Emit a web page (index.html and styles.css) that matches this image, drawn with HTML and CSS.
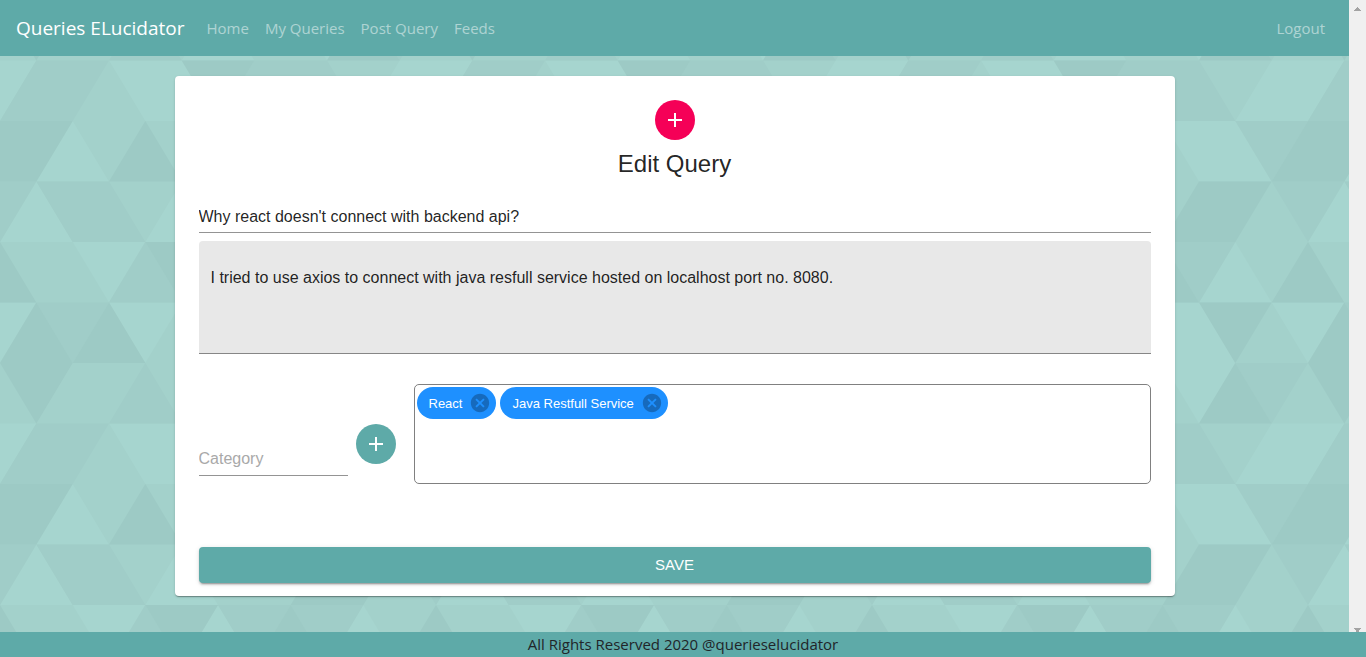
FILE: index.html
```html
<!DOCTYPE html>
<html lang="en">
<head>
<meta charset="utf-8">
<meta name="viewport" content="width=device-width, initial-scale=1">
<title>Queries ELucidator</title>
<link rel="stylesheet" href="styles.css">
</head>
<body>
<div class="viewport">
  <div class="page">
    <svg class="backdrop" aria-hidden="true">
      <defs>
        <pattern id="triangles" width="436" height="363" patternUnits="userSpaceOnUse" viewBox="0 0 12 6" preserveAspectRatio="none">
          <rect class="tone-base" width="12" height="6"/>
          <path class="tone-light" d="M8 0h2l-1 1z M5 1h2l-1-1z M-1 1h2l-1 1z M11 1h2l-1 1z M3 1h2l-1 1z M4 2h2l-1-1z M10 2h2l-1-1z M1 3h2l-1-1z M8 2h2l-1 1z M9 3h2l-1-1z M0 4h2l-1-1z M4 4h2l-1-1z M2 4h2l-1 1z M5 5h2l-1-1z M9 5h2l-1-1z M-1 5h2l-1 1z M11 5h2l-1 1z M3 5h2l-1 1z M8 6h2l-1-1z M7 5h2l-1 1z"/>
          <path class="tone-mid" d="M3 1h2l-1-1z M10 0h2l-1 1z M0 2h2l-1-1z M1 1h2l-1 1z M8 2h2l-1-1z M7 1h2l-1 1z M6 2h2l-1-1z M10 2h2l-1 1z M-1 3h2l-1 1z M11 3h2l-1 1z M1 3h2l-1 1z M2 4h2l-1-1z M3 5h2l-1-1z M6 4h2l-1 1z M8 4h2l-1 1z M1 5h2l-1 1z"/>
          <path class="tone-dark" d="M0 0h2l-1 1z M9 1h2l-1-1z M5 1h2l-1 1z M0 2h2l-1 1z M-1 3h2l-1-1z M11 3h2l-1-1z M3 3h2l-1-1z M9 3h2l-1 1z M8 4h2l-1-1z M-1 5h2l-1-1z M11 5h2l-1-1z M4 4h2l-1 1z M7 5h2l-1-1z M0 6h2l-1-1z M2 6h2l-1-1z M9 5h2l-1 1z"/>
        </pattern>
      </defs>
      <rect width="100%" height="100%" fill="url(#triangles)"/>
    </svg>
    <nav class="navbar">
      <a class="brand" href="#">Queries ELucidator</a>
      <a class="nav-link" href="#">Home</a>
      <a class="nav-link" href="#">My Queries</a>
      <a class="nav-link" href="#">Post Query</a>
      <a class="nav-link" href="#">Feeds</a>
      <a class="nav-link nav-end" href="#">Logout</a>
    </nav>
    <main class="content">
      <form class="card">
        <div class="round round-pink">
          <svg class="icon" viewBox="0 0 24 24" aria-hidden="true"><path d="M19 13h-6v6h-2v-6H5v-2h6V5h2v6h6v2z"/></svg>
        </div>
        <h1 class="title">Edit Query</h1>
        <input class="field field-title" type="text" aria-label="Title" value="Why react doesn't connect with backend api?">
        <textarea class="description" aria-label="Description">I tried to use axios to connect with java resfull service hosted on localhost port no. 8080.</textarea>
        <div class="categories">
          <input class="field field-category" type="text" aria-label="Category" placeholder="Category">
          <button class="round round-teal" type="button" aria-label="Add category">
            <svg class="icon" viewBox="0 0 24 24" aria-hidden="true"><path d="M19 13h-6v6h-2v-6H5v-2h6V5h2v6h6v2z"/></svg>
          </button>
          <div class="tags">
            <span class="chip">React
              <button class="chip-remove" type="button" aria-label="Remove React">
                <svg class="chip-icon" viewBox="0 0 24 24" aria-hidden="true"><path d="M12 2C6.47 2 2 6.47 2 12s4.470 10 10 10 10-4.470 10-10S17.530 2 12 2zm5 13.590L15.590 17 12 13.410 8.410 17 7 15.590 10.590 12 7 8.410 8.410 7 12 10.590 15.590 7 17 8.410 13.410 12 17 15.590z"/></svg>
              </button>
            </span>
            <span class="chip">Java Restfull Service
              <button class="chip-remove" type="button" aria-label="Remove Java Restfull Service">
                <svg class="chip-icon" viewBox="0 0 24 24" aria-hidden="true"><path d="M12 2C6.47 2 2 6.47 2 12s4.470 10 10 10 10-4.470 10-10S17.530 2 12 2zm5 13.590L15.590 17 12 13.410 8.410 17 7 15.590 10.590 12 7 8.410 8.410 7 12 10.590 15.590 7 17 8.410 13.410 12 17 15.590z"/></svg>
              </button>
            </span>
          </div>
        </div>
        <button class="save" type="submit">SAVE</button>
      </form>
    </main>
  </div>
  <div class="scrollbar" aria-hidden="true">
    <svg class="arrow" viewBox="0 0 7 4" shape-rendering="crispEdges"><path d="M3 0h1v1h1v1h1v1h1v1H0V3h1V2h1V1h1z"/></svg>
    <svg class="arrow" viewBox="0 0 7 4" shape-rendering="crispEdges"><path d="M0 0h7v1H6v1H5v2H2V2H1V1H0z"/></svg>
  </div>
</div>
<footer class="footer">All Rights Reserved 2020 @querieselucidator</footer>
</body>
</html>
```
FILE: styles.css
```css
* {
  box-sizing: border-box;
}

body {
  margin: 0;
  min-height: 100vh;
  display: flex;
  flex-direction: column;
  font-family: "Open Sans", sans-serif;
  font-size: 15px;
  color: #212529;
}

.viewport {
  flex: 1;
  display: flex;
}

.page {
  position: relative;
  flex: 1;
  min-width: 0;
}

.backdrop {
  position: absolute;
  inset: 0;
  width: 100%;
  height: 100%;
}

.tone-light { fill: #a6d5cf; }
.tone-base { fill: #a3d1cb; }
.tone-mid { fill: #a0cdc8; }
.tone-dark { fill: #9dcac5; }

.navbar {
  position: relative;
  display: flex;
  align-items: center;
  gap: 16px;
  height: 56px;
  padding: 0 24px 0 16px;
  background: #5eaaa8;
}

.brand {
  margin-right: 6px;
  font-size: 19px;
  color: #fff;
  text-decoration: none;
}

.nav-link {
  color: rgba(255, 255, 255, 0.5);
  text-decoration: none;
}

.nav-end {
  margin-left: auto;
}

.content {
  position: relative;
  padding: 20px 24px 36px;
}

.card {
  display: flex;
  flex-direction: column;
  max-width: 1000px;
  margin: 0 auto;
  padding: 24px 24px 13px;
  border-radius: 4px;
  background: #fff;
  box-shadow: 0 2px 1px -1px rgba(0, 0, 0, 0.2), 0 1px 1px rgba(0, 0, 0, 0.14), 0 1px 3px rgba(0, 0, 0, 0.12);
  font-family: "Liberation Sans", Arial, sans-serif;
  font-size: 16px;
  color: rgba(0, 0, 0, 0.87);
}

.round {
  display: flex;
  align-items: center;
  justify-content: center;
  flex: none;
  width: 40px;
  height: 40px;
  padding: 0;
  border: 0;
  border-radius: 50%;
  color: #fff;
}

.round-pink {
  align-self: center;
  background: #f50057;
}

.round-teal {
  margin: 0 18px 0 8px;
  background: #5eaaa8;
}

.icon {
  width: 24px;
  height: 24px;
  fill: currentColor;
}

.title {
  margin: 8px 0 20px;
  font-size: 24px;
  font-weight: 400;
  line-height: 32px;
  text-align: center;
}

.field {
  height: 33px;
  padding: 2px 0 0;
  border: 0;
  border-bottom: 1px solid #949494;
  background: transparent;
  font: inherit;
  color: inherit;
}

.field::placeholder {
  color: #a9a9a9;
  opacity: 1;
}

.description {
  height: 113px;
  margin: 8px 0 30px;
  padding: 27px 12px 10px;
  border: 0;
  border-bottom: 1px solid #868686;
  border-radius: 4px 4px 0 0;
  background: #e8e8e8;
  font: inherit;
  line-height: 19px;
  color: inherit;
  resize: none;
}

.categories {
  display: flex;
  align-items: center;
}

.field-category {
  width: 149px;
  height: 36px;
  align-self: flex-end;
  margin-bottom: 8px;
}

.categories .round {
  margin-top: 20px;
}

.tags {
  flex: 1;
  display: flex;
  flex-wrap: wrap;
  align-content: flex-start;
  gap: 4px;
  min-height: 100px;
  padding: 2px;
  border: 1px solid #808080;
  border-radius: 5px;
}

.chip {
  display: flex;
  align-items: center;
  gap: 7px;
  height: 32px;
  padding: 0 5px 0 12px;
  border-radius: 16px;
  background: #1e90ff;
  font-size: 13px;
  color: #fff;
}

.chip-remove {
  display: flex;
  padding: 0;
  border: 0;
  background: transparent;
}

.chip-icon {
  width: 22px;
  height: 22px;
  fill: rgba(0, 0, 0, 0.26);
}

.save {
  height: 36px;
  margin-top: 63px;
  padding: 0 0 2px;
  border: 0;
  border-radius: 4px;
  background: #5eaaa8;
  box-shadow: 0 3px 1px -2px rgba(0, 0, 0, 0.2), 0 2px 2px rgba(0, 0, 0, 0.14), 0 1px 5px rgba(0, 0, 0, 0.12);
  font: inherit;
  font-size: 15px;
  color: #fff;
}

.scrollbar {
  display: flex;
  flex-direction: column;
  align-items: center;
  justify-content: space-between;
  width: 17px;
  padding-top: 7px;
  background: #f0f0f0;
}

.arrow {
  width: 7px;
  height: 4px;
  fill: #a3a3a3;
}

.footer {
  height: 25px;
  line-height: 25px;
  background: #5eaaa8;
  text-align: center;
}
```
